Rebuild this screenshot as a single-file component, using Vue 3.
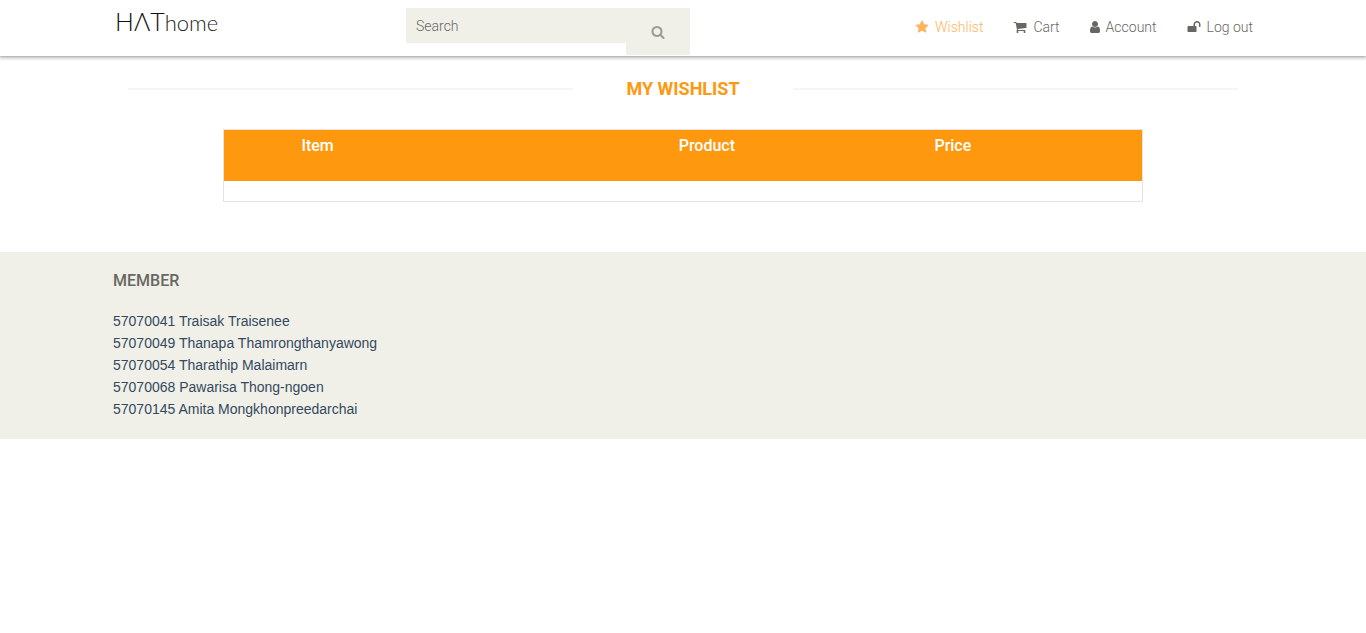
<script setup>
import { ref } from 'vue'

const query = ref('')

const searchIcon = 'M1216 832q0-185-131.5-316.5t-316.5-131.5-316.5 131.5-131.5 316.5 131.5 316.5 316.5 131.5 316.5-131.5 131.5-316.5zm512 832q0 52-38 90t-90 38q-54 0-90-38l-343-342q-179 124-399 124-143 0-273.5-55.5t-225-150-150-225-55.5-273.5 55.5-273.5 150-225 225-150 273.5-55.5 273.5 55.5 225 150 150 225 55.5 273.5q0 220-124 399l343 343q37 37 37 90z'

const links = [
  {
    label: 'Wishlist',
    active: true,
    width: 14,
    box: '0 0 1792 1792',
    path: 'M1728 647q0 22-26 48l-363 354 86 500q1 7 1 20 0 21-10.5 35.5t-30.5 14.5q-19 0-40-12l-449-236-449 236q-22 12-40 12-21 0-31.5-14.5t-10.5-35.5q0-6 2-20l86-500-364-354q-25-27-25-48 0-37 56-46l502-73 225-455q19-41 49-41t49 41l225 455 502 73q56 9 56 46z'
  },
  {
    label: 'Cart',
    width: 14,
    box: '0 0 1792 1792',
    path: 'M704 1536q0 52-38 90t-90 38-90-38-38-90 38-90 90-38 90 38 38 90zm896 0q0 52-38 90t-90 38-90-38-38-90 38-90 90-38 90 38 38 90zm128-1088v512q0 24-16.5 42.5t-40.5 21.5l-1044 122q13 60 13 70 0 16-24 64h920q26 0 45 19t19 45-19 45-45 19h-1024q-26 0-45-19t-19-45q0-11 8-31.5t16-36 21.5-40 15.5-29.5l-177-823h-204q-26 0-45-19t-19-45 19-45 45-19h256q16 0 28.5 6.5t19.5 15.5 13 24.5 8 26 5.5 29.5 4.5 26h1201q26 0 45 19t19 45z'
  },
  {
    label: 'Account',
    width: 10,
    box: '256 0 1280 1792',
    path: 'M1536 1399q0 109-62.5 187t-150.5 78h-854q-88 0-150.5-78t-62.5-187q0-85 8.5-160.5t31.5-152 58.5-131 94-89 134.5-34.5q131 128 313 128t313-128q76 0 134.5 34.5t94 89 58.5 131 31.5 152 8.5 160.5zm-256-887q0 159-112.5 271.5t-271.5 112.5-271.5-112.5-112.5-271.5 112.5-271.5 271.5-112.5 271.5 112.5 112.5 271.5z'
  },
  {
    label: 'Log out',
    width: 14,
    box: '0 0 1792 1792',
    path: 'M1728 576v256q0 26-19 45t-45 19h-64q-26 0-45-19t-19-45v-256q0-106-75-181t-181-75-181 75-75 181v192h96q40 0 68 28t28 68v576q0 40-28 68t-68 28h-960q-40 0-68-28t-28-68v-576q0-40 28-68t68-28h672v-192q0-185 131.5-316.5t316.5-131.5 316.5 131.5 131.5 316.5z'
  }
]

const members = [
  '57070041 Traisak Traisenee',
  '57070049 Thanapa Thamrongthanyawong',
  '57070054 Tharathip Malaimarn',
  '57070068 Pawarisa Thong-ngoen',
  '57070145 Amita Mongkhonpreedarchai'
]
</script>

<template>
  <div class="page">
    <header class="topbar">
      <div class="container bar">
        <a class="logo" href="#" aria-label="HAThome"><span class="caps">HΛT</span>home</a>
        <form class="search" role="search" @submit.prevent>
          <input v-model="query" class="field" type="text" placeholder="Search" aria-label="Search" />
          <button class="go" type="submit" aria-label="Submit search">
            <svg width="14" height="14" viewBox="0 0 1792 1792" aria-hidden="true"><path :d="searchIcon" /></svg>
          </button>
        </form>
        <nav class="links">
          <a v-for="link in links" :key="link.label" href="#" :class="{ active: link.active }">
            <svg :width="link.width" height="14" :viewBox="link.box" aria-hidden="true"><path :d="link.path" /></svg>
            <span>{{ link.label }}</span>
          </a>
        </nav>
      </div>
    </header>

    <main class="container main">
      <h1 class="title"><span>MY WISHLIST</span></h1>
      <table class="wishlist">
        <colgroup>
          <col class="c-item" />
          <col class="c-gap" />
          <col class="c-wide" />
          <col class="c-wide" />
          <col />
        </colgroup>
        <thead>
          <tr>
            <th scope="col">Item</th>
            <td></td>
            <th scope="col">Product</th>
            <th scope="col">Price</th>
            <td></td>
          </tr>
        </thead>
        <tbody>
          <tr><td class="blank" colspan="5"></td></tr>
        </tbody>
      </table>
    </main>

    <footer class="footer">
      <div class="container">
        <h2>MEMBER</h2>
        <ul>
          <li v-for="m in members" :key="m"><a href="#">{{ m }}</a></li>
        </ul>
      </div>
    </footer>
  </div>
</template>

<style>
body {
  margin: 0;
  background: #fff;
}
</style>

<style scoped>
.page {
  font-family: Roboto, "Liberation Sans", sans-serif;
  font-size: 14px;
  color: #696763;
}
.container {
  box-sizing: border-box;
  max-width: 1140px;
  margin: 0 auto;
}
a {
  color: inherit;
  text-decoration: none;
}
svg {
  display: block;
  fill: currentColor;
}
.topbar {
  background: #fff;
  box-shadow: 0 0 4px 1px rgba(0, 0, 0, 0.45);
}
.bar {
  display: grid;
  grid-template-columns: 293px 284px 1fr;
  align-items: start;
  height: 56px;
}
.logo {
  padding: 6px 0 0 2px;
  font-family: Lato, sans-serif;
  font-size: 22px;
  line-height: 30px;
  font-weight: 300;
  color: #222;
}
.caps {
  font-size: 25px;
  color: #111;
}
.search {
  display: flex;
  align-items: flex-start;
  padding-top: 8px;
}
.field {
  box-sizing: border-box;
  flex: 1;
  min-width: 0;
  height: 35px;
  padding: 0 10px;
  border: 0;
  outline: 0;
  background: #f0f0e9;
  font-family: inherit;
  font-size: 14px;
  font-weight: 300;
  color: #696763;
}
.field::placeholder {
  color: #696763;
  opacity: 1;
}
.go {
  display: flex;
  align-items: center;
  justify-content: center;
  width: 64px;
  height: 47px;
  padding: 0;
  border: 0;
  background: #f0f0e9;
  color: #9a9a96;
}
.links {
  display: flex;
  justify-content: flex-end;
  gap: 30px;
  padding-top: 17px;
  font-weight: 300;
  line-height: 20px;
}
.links a {
  display: flex;
  align-items: center;
  gap: 6px;
}
.links .active {
  color: #fdb45e;
}
.main {
  padding: 22px 15px 50px;
}
.title {
  display: flex;
  align-items: center;
  margin: 0 0 29px;
  font-size: 18px;
  line-height: 22px;
  font-weight: 700;
  color: #fe980f;
}
.title::before,
.title::after {
  content: "";
  flex: 1;
  height: 2px;
  background: #f5f5f5;
}
.title span {
  width: 220px;
  text-align: center;
}
.wishlist {
  box-sizing: border-box;
  width: 100%;
  max-width: 920px;
  margin: 0 auto;
  border: 1px solid #e6e4df;
  border-collapse: separate;
  border-spacing: 0;
  table-layout: fixed;
}
.c-item {
  width: 20.4%;
}
.c-gap {
  width: 18.8%;
}
.c-wide {
  width: 26.8%;
}
.wishlist thead {
  background: #fe980f;
  color: #fff;
}
.wishlist th {
  height: 51px;
  box-sizing: border-box;
  padding: 5px 0 0;
  vertical-align: top;
  font-size: 16px;
  line-height: 22px;
  font-weight: 500;
}
.wishlist td {
  padding: 0;
}
.wishlist .blank {
  height: 20px;
}
.footer {
  padding: 18px 0 19px;
  background: #f0f0e9;
}
.footer h2 {
  margin: 0 0 18px;
  font-size: 16px;
  line-height: 22px;
  font-weight: 500;
}
.footer ul {
  margin: 0;
  padding: 0;
  list-style: none;
  font-family: "Liberation Sans", Arial, sans-serif;
  font-size: 14px;
  line-height: 22px;
  color: #34495e;
}
</style>
